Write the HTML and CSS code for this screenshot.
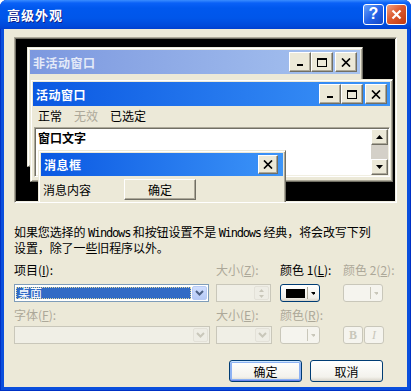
FILE: index.html
```html
<!DOCTYPE html>
<html lang="zh-CN">
<head>
  <meta charset="UTF-8">
  <title>高级外观</title>
  <link rel="stylesheet" href="styles.css">
</head>
<body>
  <div class="window">
    <div class="titlebar">
      <span class="title">高级外观</span>
      <div class="cap help">?</div>
      <div class="cap close">
        <svg width="11" height="11" viewBox="0 0 11 11"><path d="M1.5 1.5L9.5 9.5M9.5 1.5L1.5 9.5" stroke="#fff" stroke-width="2.2"/></svg>
      </div>
    </div>

    <div class="client">
      <!-- preview of the window scheme -->
      <div class="preview">
        <div class="pwin inactive">
          <div class="ptitle">
            <span>非活动窗口</span>
            <div class="pbtn"><svg width="8" height="9"><rect x="1" y="6" width="6" height="2"/></svg></div>
            <div class="pbtn"><svg width="10" height="9"><rect x="0.5" y="0.5" width="9" height="8" fill="none" stroke="#000"/><rect x="0" y="0" width="10" height="2"/></svg></div>
            <div class="pbtn gap"><svg width="10" height="9"><path d="M1 0.5L9 8.5M9 0.5L1 8.5" stroke="#000" stroke-width="1.7"/></svg></div>
          </div>
        </div>

        <div class="pwin active">
          <div class="ptitle">
            <span>活动窗口</span>
            <div class="pbtn"><svg width="8" height="9"><rect x="1" y="6" width="6" height="2"/></svg></div>
            <div class="pbtn"><svg width="10" height="9"><rect x="0.5" y="0.5" width="9" height="8" fill="none" stroke="#000"/><rect x="0" y="0" width="10" height="2"/></svg></div>
            <div class="pbtn gap"><svg width="10" height="9"><path d="M1 0.5L9 8.5M9 0.5L1 8.5" stroke="#000" stroke-width="1.7"/></svg></div>
          </div>
          <div class="pmenu">
            <span>正常</span>
            <span class="off">无效</span>
            <span>已选定</span>
          </div>
          <div class="ptext">
            <div class="txt">窗口文字</div>
            <div class="scroll">
              <div class="sbtn"><svg width="7" height="4"><path d="M0 4L3.5 0L7 4Z"/></svg></div>
              <div class="strack"></div>
              <div class="sbtn"><svg width="7" height="4"><path d="M0 0L3.5 4L7 0Z"/></svg></div>
            </div>
          </div>
        </div>

        <div class="pwin msgbox">
          <div class="ptitle">
            <span>消息框</span>
            <div class="pbtn"><svg width="10" height="9"><path d="M1 0.5L9 8.5M9 0.5L1 8.5" stroke="#000" stroke-width="1.7"/></svg></div>
          </div>
          <div class="mbody">
            <span>消息内容</span>
            <div class="mok">确定</div>
          </div>
        </div>
      </div>

      <div class="desc">
        <div class="line">如果您选择的 <span class="latin">Windows</span> 和按钮设置不是 <span class="latin">Windows</span> 经典，将会改写下列</div>
        <div class="line">设置，除了一些旧程序以外。</div>
      </div>

      <div class="fields">
        <div class="lbl">项目(<u>I</u>):</div>
        <div class="lbl off">大小(<u>Z</u>):</div>
        <div class="lbl">颜色 1(<u>L</u>):</div>
        <div class="lbl off">颜色 2(<u>2</u>):</div>

        <div class="combo w-item">
          <div class="val"><span>桌面</span></div>
          <div class="drop"><svg width="9" height="6"><path d="M1 1L4.5 4.5L8 1" fill="none" stroke="#4D6185" stroke-width="2"/></svg></div>
        </div>
        <div class="spin dis">
          <div class="arrows">
            <svg width="5" height="3"><path d="M0 3L2.5 0L5 3Z" fill="#C9C7BA"/></svg>
            <svg width="5" height="3"><path d="M0 0L2.5 3L5 0Z" fill="#C9C7BA"/></svg>
          </div>
        </div>
        <div class="cbtn">
          <div class="swatch"></div>
          <div class="sep"></div>
          <svg width="5" height="3"><path d="M0 0L2.5 3L5 0Z"/></svg>
        </div>
        <div class="cbtn dis">
          <div class="swatch"></div>
          <div class="sep"></div>
          <svg width="5" height="3"><path d="M0 0L2.5 3L5 0Z" fill="#C9C7BA"/></svg>
        </div>

        <div class="lbl off">字体(<u>F</u>):</div>
        <div class="lbl off">大小(<u>E</u>):</div>
        <div class="lbl off">颜色(<u>R</u>):</div>
        <div></div>

        <div class="combo dis w-font">
          <div class="val"></div>
          <div class="drop"><svg width="9" height="6"><path d="M1 1L4.5 4.5L8 1" fill="none" stroke="#C9C7BA" stroke-width="2"/></svg></div>
        </div>
        <div class="combo dis w-size">
          <div class="val"></div>
          <div class="drop"><svg width="9" height="6"><path d="M1 1L4.5 4.5L8 1" fill="none" stroke="#C9C7BA" stroke-width="2"/></svg></div>
        </div>
        <div class="cbtn dis">
          <div class="swatch"></div>
          <div class="sep"></div>
          <svg width="5" height="3"><path d="M0 0L2.5 3L5 0Z" fill="#C9C7BA"/></svg>
        </div>
        <div class="styles">
          <div class="sbox bold">B</div>
          <div class="sbox ital">I</div>
        </div>
      </div>

      <div class="actions">
        <div class="btn default">确定</div>
        <div class="btn">取消</div>
      </div>
    </div>
  </div>
</body>
</html>
```

FILE: styles.css
```css
* {
  box-sizing: border-box;
}
body {
  margin: 0;
  background: #fff;
  font-family: "Noto Sans CJK SC", sans-serif;
  font-size: 12px;
  color: #000;
}
.window {
  width: 411px;
  height: 391px;
  display: flex;
  flex-direction: column;
  background: #0A4FDD;
  border-radius: 7px 7px 0 0;
  box-shadow: inset 1px 0 #0031C5, inset -1px 0 #0031C5, inset 0 -1px #0031C5;
  overflow: hidden;
}
.titlebar {
  height: 29px;
  flex: none;
  display: flex;
  align-items: center;
  padding: 0 4px 1px 7px;
  background: linear-gradient(#3A8DFF 0, #0A61F7 3px, #0058EE 8px, #0056EA 18px, #0049DA 26px, #003FD0 29px);
  color: #fff;
}
.title {
  flex: 1;
  font-size: 13px;
  font-weight: bold;
  letter-spacing: 1px;
  text-shadow: 1px 1px #0F1F89;
}
.cap {
  width: 21px;
  height: 21px;
  border: 1px solid #fff;
  border-radius: 3px;
  display: flex;
  align-items: center;
  justify-content: center;
}
.help {
  background: linear-gradient(135deg, #6AA2FA, #2463E8 50%, #1247C8);
  font-family: "Liberation Sans", sans-serif;
  font-weight: bold;
  font-size: 16px;
  color: #fff;
}
.close {
  margin-left: 2px;
  background: linear-gradient(135deg, #F0A080, #DC5A30 45%, #C0380F);
}

.client {
  flex: 1;
  margin: 0 4px 4px;
  background: #ECE9D8;
  padding: 8px 10px 0;
}

/* preview area */
.preview {
  position: relative;
  height: 166px;
  background: #000;
  border: 1px solid;
  border-color: #ACA899 #fff #fff #ACA899;
  box-shadow: inset 1px 1px #716F64, inset -1px -1px #F1EFE2;
  overflow: hidden;
}
.pwin {
  position: absolute;
  display: flex;
  flex-direction: column;
  background: #ECE9D8;
  border: 1px solid;
  border-color: #ECE9D8 #716F64 #716F64 #ECE9D8;
  box-shadow: inset 1px 1px #fff, inset -1px -1px #ACA899;
  padding: 2px;
}
.inactive {
  left: 12px;
  top: 9px;
  width: 336px;
  height: 120px;
}
.active {
  left: 15px;
  top: 41px;
  width: 363px;
  height: 103px;
}
.msgbox {
  left: 23px;
  top: 112px;
  width: 248px;
  height: 56px;
}
.ptitle {
  height: 24px;
  flex: none;
  display: flex;
  align-items: center;
  padding: 0 3px 0 3px;
  font-weight: bold;
  color: #fff;
  background: linear-gradient(90deg, #0A58E2, #3D95F8);
}
.ptitle span {
  flex: 1;
  letter-spacing: 0.5px;
}
.inactive .ptitle {
  background: linear-gradient(90deg, #7C98DF, #A8C4F0);
  color: #E4EAF8;
}
.msgbox .ptitle {
  height: 23px;
  padding-right: 5px;
}
.pbtn {
  width: 22px;
  height: 20px;
  display: flex;
  align-items: center;
  justify-content: center;
  background: #ECE9D8;
  border: 1px solid;
  border-color: #fff #716F64 #716F64 #fff;
  box-shadow: inset -1px -1px #ACA899;
}
.pbtn.gap {
  margin-left: 2px;
}
.msgbox .pbtn {
  width: 20px;
  height: 19px;
}
.pmenu {
  height: 19px;
  display: flex;
  align-items: center;
  padding-left: 5px;
}
.pmenu span {
  margin-right: 12px;
}
.pmenu .off {
  color: #ACA899;
}
.ptext {
  height: 50px;
  margin: 2px 0 0 1px;
  display: flex;
  background: #fff;
  border: 1px solid;
  border-color: #ACA899 #fff #fff #ACA899;
  box-shadow: inset 1px 1px #716F64, inset -1px -1px #F1EFE2;
  padding: 1px;
}
.ptext .txt {
  flex: 1;
  padding: 1px 2px;
  line-height: 16px;
  font-weight: bold;
}
.scroll {
  width: 17px;
  display: flex;
  flex-direction: column;
}
.sbtn {
  height: 16px;
  display: flex;
  align-items: center;
  justify-content: center;
  background: #ECE9D8;
  border: 1px solid;
  border-color: #fff #716F64 #716F64 #fff;
  box-shadow: inset -1px -1px #ACA899;
}
.strack {
  flex: 1;
  background: #D4D0C8;
}
.mbody {
  display: flex;
  align-items: center;
  padding: 3px 0 0 2px;
}
.mok {
  margin-left: 33px;
  width: 72px;
  height: 21px;
  display: flex;
  align-items: center;
  justify-content: center;
  border: 1px solid;
  border-color: #fff #716F64 #716F64 #fff;
  box-shadow: inset -1px -1px #ACA899;
}

.desc {
  margin: 21px 0 0;
  white-space: nowrap;
  letter-spacing: -0.1px;
}
.desc .line {
  height: 15px;
  line-height: 15px;
}
.desc .line + .line {
  margin-top: 1px;
}
.latin {
  font-family: "DejaVu Sans Mono", monospace;
  letter-spacing: -1.2px;
}

/* item / font controls */
.fields {
  display: grid;
  grid-template-columns: 202px 64px 63px 1fr;
  grid-template-rows: 22px 23px 19px 18px;
  align-items: start;
  margin-top: 7px;
  padding-right: 14px;
}
.lbl {
  line-height: 16px;
  white-space: nowrap;
}
.lbl.off {
  color: #ACA899;
}
.combo {
  height: 18px;
  display: flex;
  padding: 1px;
  border: 1px solid #7F9DB9;
  background: #fff;
}
.w-item {
  width: 195px;
}
.w-font {
  width: 196px;
}
.w-size {
  width: 56px;
}
.combo .val {
  flex: 1;
  display: flex;
  align-items: center;
  margin: 1px 1px 1px 0;
}
.w-item .val {
  background: #316AC5;
  color: #fff;
  outline: 1px dotted #E0D8A0;
  outline-offset: -1px;
  padding-left: 2px;
  line-height: 12px;
}
.combo .drop {
  width: 15px;
  display: flex;
  align-items: center;
  justify-content: center;
  border-radius: 2px;
  background: linear-gradient(#D0DEFE, #B6CAF6);
  border: 1px solid #B8CBF4;
}
.combo.dis {
  border-color: #C9C7BA;
  background: #F0EFE6;
}
.combo.dis .drop {
  background: #EEEDE5;
  border-color: #E3E1D8;
}
.spin {
  width: 55px;
  height: 18px;
  display: flex;
  justify-content: flex-end;
  padding: 1px;
  border: 1px solid #C9C7BA;
  background: #F0EFE6;
}
.spin .arrows {
  width: 15px;
  display: flex;
  flex-direction: column;
  align-items: center;
  justify-content: space-around;
  border: 1px solid #E3E1D8;
  border-radius: 2px;
  background: #EEEDE5;
}
.cbtn {
  width: 40px;
  height: 18px;
  display: flex;
  align-items: center;
  padding: 0 4px 0 5px;
  border: 1px solid #003C74;
  border-radius: 3px;
  background: linear-gradient(#fff, #F0EFEA 80%, #D8D3C8);
}
.cbtn .swatch {
  width: 23px;
  height: 9px;
  background: #000;
}
.cbtn .sep {
  width: 1px;
  height: 12px;
  margin: 0 3px 0 2px;
  background: #ACA899;
}
.cbtn.dis {
  border-color: #C9C7BA;
  background: #F5F4EE;
}
.cbtn.dis .swatch {
  background: transparent;
}
.cbtn.dis .sep {
  background: #C9C7BA;
}
.styles {
  display: flex;
  gap: 1px;
}
.sbox {
  width: 20px;
  height: 18px;
  display: flex;
  align-items: center;
  justify-content: center;
  border: 1px solid #C9C7BA;
  border-radius: 3px;
  background: #F5F4EE;
  color: #C9C7BA;
  font-family: "Liberation Serif", serif;
  font-size: 12px;
}
.sbox.bold {
  font-weight: bold;
}
.sbox.ital {
  font-style: italic;
}

.actions {
  display: flex;
  justify-content: flex-end;
  gap: 8px;
  margin-top: 16px;
  padding-right: 14px;
}
.btn {
  width: 73px;
  height: 22px;
  display: flex;
  align-items: center;
  justify-content: center;
  border: 1px solid #003C74;
  border-radius: 3px;
  background: linear-gradient(#fff, #F3F2EC 80%, #D8D3C8);
}
.btn.default {
  box-shadow: inset 0 1px #CEE7FF, inset 0 -1px #6982EE, inset 0 0 0 2px #8DB2F3;
}
```
